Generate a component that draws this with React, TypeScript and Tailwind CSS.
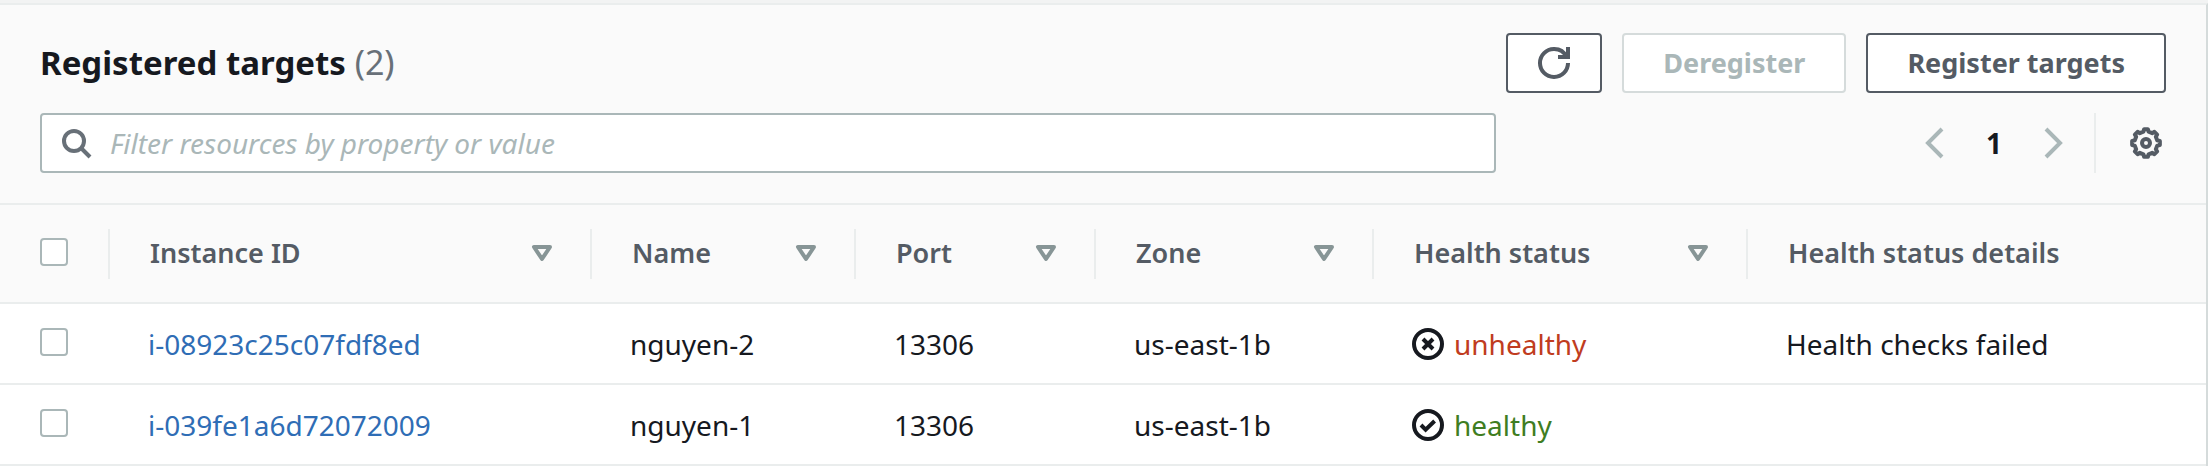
import React from "react";

type IconProps = { className?: string; children: React.ReactNode };

function Icon({ className = "", children }: IconProps) {
  return (
    <svg
      viewBox="0 0 16 16"
      aria-hidden="true"
      className={`size-8 shrink-0 fill-none stroke-current stroke-2 ${className}`}
    >
      {children}
    </svg>
  );
}

const RefreshIcon = () => (
  <Icon>
    <path d="M10 5h5V0" />
    <path d="M15 8a6.957 6.957 0 0 1-7 7 6.957 6.957 0 0 1-7-7 6.957 6.957 0 0 1 7-7 6.87 6.87 0 0 1 6.3 4" />
  </Icon>
);

const SearchIcon = () => (
  <Icon className="text-[#687078]">
    <circle cx="7" cy="7" r="5" />
    <path d="m15 15-4.5-4.5" />
  </Icon>
);

// Eight teeth, each given by two outer and two inner corners.
const gearPoints = Array.from({ length: 8 }, (_, tooth) =>
  [
    [-13, 5.8],
    [-8, 7],
    [8, 7],
    [13, 5.8],
  ].map(([offset, radius]) => {
    const angle = ((tooth * 45 + offset) * Math.PI) / 180;
    return `${(8 + radius * Math.sin(angle)).toFixed(2)},${(8 - radius * Math.cos(angle)).toFixed(2)}`;
  })
)
  .flat()
  .join(" ");

const SettingsIcon = () => (
  <Icon>
    <polygon strokeLinejoin="round" points={gearPoints} />
    <circle cx="8" cy="8" r="2" />
  </Icon>
);

const SortIcon = () => (
  <Icon className="text-[#879596]">
    <path strokeLinejoin="round" d="M4 5h8l-4 6z" />
  </Icon>
);

const ChevronLeft = () => (
  <Icon>
    <path d="M12 1 5 8l7 7" />
  </Icon>
);

const ChevronRight = () => (
  <Icon>
    <path d="m4 1 7 7-7 7" />
  </Icon>
);

const NegativeIcon = () => (
  <Icon>
    <circle cx="8" cy="8" r="7" />
    <path d="m10.500 5.500-5 5M5.500 5.500l5 5" />
  </Icon>
);

const PositiveIcon = () => (
  <Icon>
    <circle cx="8" cy="8" r="7" />
    <path d="m4.500 8 2.300 2.300L11.300 6" />
  </Icon>
);

const columns = [
  { label: "Instance ID", width: "w-[482px]", sortable: true },
  { label: "Name", width: "w-[264px]", sortable: true },
  { label: "Port", width: "w-[240px]", sortable: true },
  { label: "Zone", width: "w-[278px]", sortable: true },
  { label: "Health status", width: "w-[374px]", sortable: true },
  { label: "Health status details", width: "", sortable: false },
];

const targets = [
  {
    id: "i-08923c25c07fdf8ed",
    name: "nguyen-2",
    port: 13306,
    zone: "us-east-1b",
    healthy: false,
    details: "Health checks failed",
  },
  {
    id: "i-039fe1a6d72072009",
    name: "nguyen-1",
    port: 13306,
    zone: "us-east-1b",
    healthy: true,
    details: "",
  },
];

const cell = "h-[81px] border-b-2 border-[#eaeded] p-0 pl-[38px]";

function Checkbox({ label }: { label: string }) {
  return (
    <input
      type="checkbox"
      aria-label={label}
      className="block size-7 appearance-none rounded-sm border-2 border-[#aab7b8] bg-white checked:bg-[#0073bb]"
    />
  );
}

export default function App() {
  return (
    <main className="border-t-3 border-[#f2f3f3] bg-white font-['Noto_Sans','Open_Sans',sans-serif] text-[28px] leading-10 text-[#16191f]">
      <section className="border-t-2 border-r-2 border-t-[#eaeded] border-r-[#d5dbdb]">
        <header className="border-b-2 border-[#eaeded] bg-[#fafafa] px-10 pt-7 pb-[30px]">
          <div className="flex items-center justify-between">
            <h2 className="pb-0.5 text-[34px] font-bold">
              <span className="text-[33px]">Registered targets</span>{" "}
              <span className="font-normal text-[#687078]">(2)</span>
            </h2>
            <div className="flex gap-5 text-[27px] font-bold text-[#545b64]">
              <button
                type="button"
                aria-label="Refresh"
                className="flex h-15 items-center rounded-sm border-2 border-[#545b64] bg-white px-[30px]"
              >
                <RefreshIcon />
              </button>
              <button
                type="button"
                disabled
                className="h-15 rounded-sm border-2 border-[#d5dbdb] bg-white px-[39px] text-[#aab7b8]"
              >
                Deregister
              </button>
              <button type="button" className="h-15 rounded-sm border-2 border-[#545b64] bg-white px-[39px]">
                Register targets
              </button>
            </div>
          </div>
          <div className="mt-5 flex items-center justify-between">
            <label className="flex h-15 w-[68.5%] items-center gap-[18px] rounded-sm border-2 border-[#aab7b8] bg-white px-[18px]">
              <SearchIcon />
              <input
                type="text"
                aria-label="Filter resources"
                placeholder="Filter resources by property or value"
                className="min-w-0 flex-1 bg-transparent outline-none placeholder:text-[#aab7b8] placeholder:italic"
              />
            </label>
            <nav aria-label="Pagination" className="flex h-15 items-center text-[#aab7b8]">
              <button type="button" aria-label="Previous page" disabled>
                <ChevronLeft />
              </button>
              <button type="button" aria-current="page" className="px-9 font-bold text-[#16191f]">
                1
              </button>
              <button type="button" aria-label="Next page" disabled>
                <ChevronRight />
              </button>
              <div className="ml-6 flex h-full items-center border-l-2 border-[#eaeded] pr-1 pl-[34px] text-[#545b64]">
                <button type="button" aria-label="Preferences">
                  <SettingsIcon />
                </button>
              </div>
            </nav>
          </div>
        </header>
        <table className="w-full table-fixed border-separate border-spacing-0 text-left">
          <thead className="bg-[#fafafa] text-[27px] text-[#545b64]">
            <tr>
              <th scope="col" className="h-[99px] w-[110px] border-b-2 border-[#eaeded] p-0">
                <div className="flex h-[50px] items-center border-r-2 border-[#eaeded] pb-1 pl-10">
                  <Checkbox label="Select all targets" />
                </div>
              </th>
              {columns.map((column) => (
                <th
                  key={column.label}
                  scope="col"
                  className={`border-b-2 border-[#eaeded] p-0 font-semibold ${column.width}`}
                >
                  <div
                    className={`flex h-[50px] items-center justify-between pr-8 pb-0.5 pl-10 ${
                      column.sortable ? "border-r-2 border-[#eaeded]" : ""
                    }`}
                  >
                    {column.label}
                    {column.sortable && (
                      <button type="button" aria-label={`Sort by ${column.label}`}>
                        <SortIcon />
                      </button>
                    )}
                  </div>
                </th>
              ))}
            </tr>
          </thead>
          <tbody>
            {targets.map((target) => (
              <tr key={target.id}>
                <td className="h-[81px] border-b-2 border-[#eaeded] p-0 pb-1 pl-10">
                  <Checkbox label={`Select ${target.id}`} />
                </td>
                <td className={cell}>
                  <a href="#" className="text-[#2f6db5]">
                    {target.id}
                  </a>
                </td>
                <td className={cell}>{target.name}</td>
                <td className={cell}>{target.port}</td>
                <td className={cell}>{target.zone}</td>
                <td className={cell}>
                  <div className="flex items-center gap-2.5">
                    {target.healthy ? <PositiveIcon /> : <NegativeIcon />}
                    <span className={target.healthy ? "text-[#3f7d22]" : "text-[#c03c20]"}>
                      {target.healthy ? "healthy" : "unhealthy"}
                    </span>
                  </div>
                </td>
                <td className={cell}>{target.details}</td>
              </tr>
            ))}
          </tbody>
        </table>
      </section>
    </main>
  );
}
